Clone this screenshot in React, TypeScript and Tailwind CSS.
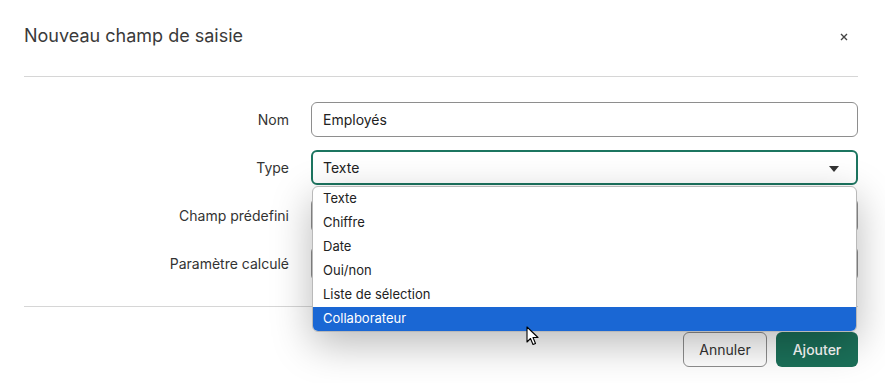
import React from "react";

const items = ["Texte", "Chiffre", "Date", "Oui/non", "Liste de sélection", "Collaborateur"];

function Row({ label, children }: { label: string; children: React.ReactNode }) {
  return (
    <div className="flex items-center h-[35px]">
      <div className="w-[265px] pr-0 text-right text-[14px] text-[#333]">{label}</div>
      <div className="ml-[22px] flex-1 h-full">{children}</div>
    </div>
  );
}

export default function App() {
  return (
    <div
      className="relative w-[885px] h-[383px] bg-white overflow-hidden"
      style={{ fontFamily: "Inter, 'Noto Sans', sans-serif" }}
    >
      <div className="pl-6 pr-[27px]">
        <div className="flex items-center justify-between h-[77px] border-b border-[#d6d6d6]">
          <div className="text-[18px] text-[#3a3a3a] font-normal -mt-[6px]">Nouveau champ de saisie</div>
          <button className="mr-[10px] -mt-[2px] text-[#444]">
            <svg width="8" height="8" viewBox="0 0 8 8">
              <path d="M1 1L7 7M7 1L1 7" stroke="#444" strokeWidth="1.4" />
            </svg>
          </button>
        </div>

        <div className="flex flex-col gap-[13px] pt-[25px] pb-[25px] border-b border-[#d6d6d6]">
          <Row label="Nom">
            <div className="h-full rounded-[6px] border border-[#8e8e8e] flex items-center px-[11px] text-[14px] text-[#222]">
              Employés
            </div>
          </Row>
          <Row label="Type">
            <div className="h-full rounded-[6px] border-2 border-[#1c7560] flex items-center justify-between px-[10px] text-[14px] text-[#222]">
              <span>Texte</span>
              <svg width="10" height="6" viewBox="0 0 10 6" className="mr-[7px] mt-[2px]">
                <path d="M0 0H10L5 6Z" fill="#333" />
              </svg>
            </div>
          </Row>
          <Row label="Champ prédefini">
            <div className="h-full rounded-[6px] border border-[#8e8e8e]" />
          </Row>
          <Row label="Paramètre calculé">
            <div className="h-full rounded-[6px] border border-[#8e8e8e]" />
          </Row>
        </div>

        <div className="flex justify-end gap-[9px] pt-[25px]">
          <button className="w-[84px] h-[35px] rounded-[6px] border border-[#8e8e8e] text-[14px] text-[#333] bg-white">
            Annuler
          </button>
          <button className="w-[82px] h-[35px] rounded-[6px] bg-[#1b7059] text-[14px] text-white font-medium">
            Ajouter
          </button>
        </div>
      </div>

      <div className="absolute left-[312px] top-[186px] w-[545px] rounded-[6px] border border-[#b9b9b9] bg-white overflow-hidden shadow-[0_12px_40px_rgba(0,0,0,0.28)]">
        {items.map((it, i) => (
          <div
            key={it}
            className={
              "h-[24px] flex items-center pl-[10px] text-[13px] " +
              (i === items.length - 1 ? "bg-[#1a67d4] text-white" : "text-[#222]")
            }
          >
            {it}
          </div>
        ))}
      </div>

      <svg className="absolute left-[526px] top-[326px]" width="14" height="20" viewBox="0 0 14 20">
        <path d="M1 1V16L4.5 12.5L7 18.5L9.5 17.5L7 11.5H12Z" fill="white" stroke="black" strokeWidth="1.1" strokeLinejoin="round" />
      </svg>
    </div>
  );
}
